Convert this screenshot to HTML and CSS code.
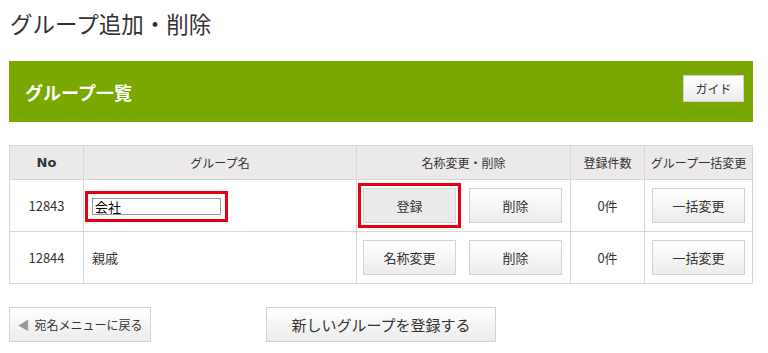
FILE: index.html
```html
<!DOCTYPE html>
<html lang="ja">

<head>
    <meta charset="UTF-8">
    <meta name="viewport" content="width=device-width, initial-scale=1.0">
    <title>グループ追加・削除</title>
    <link rel="stylesheet" href="styles.css">
</head>

<body>
    <div class="page">
        <h1 class="page-title">グループ追加・削除</h1>

        <div class="section-bar">
            <h2>グループ一覧</h2>
            <button class="btn guide-btn">ガイド</button>
        </div>

        <table class="group-table">
            <thead>
                <tr>
                    <th class="col-no">No</th>
                    <th class="col-name">グループ名</th>
                    <th class="col-edit">名称変更・削除</th>
                    <th class="col-count">登録件数</th>
                    <th class="col-bulk">グループ一括変更</th>
                </tr>
            </thead>
            <tbody>
                <tr>
                    <td class="num">12843</td>
                    <td class="name"><input type="text" class="name-input marked" value="会社"></td>
                    <td class="edit">
                        <div class="btn-pair">
                            <button class="btn cell-btn pressed marked-btn">登録</button>
                            <button class="btn cell-btn">削除</button>
                        </div>
                    </td>
                    <td class="count">0件</td>
                    <td class="bulk"><button class="btn cell-btn">一括変更</button></td>
                </tr>
                <tr>
                    <td class="num">12844</td>
                    <td class="name">親戚</td>
                    <td class="edit">
                        <div class="btn-pair">
                            <button class="btn cell-btn">名称変更</button>
                            <button class="btn cell-btn">削除</button>
                        </div>
                    </td>
                    <td class="count">0件</td>
                    <td class="bulk"><button class="btn cell-btn">一括変更</button></td>
                </tr>
            </tbody>
        </table>

        <div class="footer-actions">
            <button class="btn back-btn"><span class="arrow">&#9664;</span>宛名メニューに戻る</button>
            <button class="btn new-btn">新しいグループを登録する</button>
        </div>
    </div>
</body>

</html>
```

FILE: styles.css
```css
body {
    margin: 0;
    padding: 0;
    background-color: #fff;
    color: #333;
    font-family: "Noto Sans CJK JP", "Liberation Sans", sans-serif;
}

.page {
    width: 744px;
    padding: 0 9px;
}

.page-title {
    margin: 10px 0 0 1px;
    font-size: 22.5px;
    font-weight: normal;
    line-height: 27px;
    color: #333;
}

.section-bar {
    margin-top: 24px;
    height: 61px;
    background-color: #7aa800;
    display: flex;
    align-items: center;
    justify-content: space-between;
    padding: 0 9px 0 16px;
}

.section-bar h2 {
    margin: 0;
    color: #fff;
    font-size: 18px;
    font-weight: bold;
}

/* shared button look */
.btn {
    font-family: "Noto Sans CJK JP", "Liberation Sans", sans-serif;
    color: #333;
    background: linear-gradient(#ffffff, #ececec);
    border: 1px solid #d2d2d2;
    border-radius: 0;
    cursor: pointer;
    padding: 0;
}

.guide-btn {
    width: 61px;
    height: 27px;
    font-size: 12px;
    margin-top: -6px;
}

.group-table {
    margin-top: 23px;
    width: 744px;
    border-collapse: collapse;
    table-layout: fixed;
    font-size: 13px;
}

.group-table th,
.group-table td {
    border: 1px solid #d8d8d8;
    padding: 0;
}

.group-table th {
    height: 33px;
    background-color: #ebe9ea;
    font-size: 12px;
    font-weight: normal;
    color: #333;
}

.group-table th.col-no {
    font-weight: bold;
    font-size: 13px;
    font-family: "DejaVu Sans", sans-serif;
}

/* widths for the first four columns, the last one takes what is left */
.col-no { width: 73px; }
.col-name { width: 272px; }
.col-edit { width: 213px; }
.col-count { width: 73px; }

.group-table td {
    height: 51px;
    text-align: center;
}

.group-table td.name {
    text-align: left;
    padding-left: 8px;
}

.btn-pair {
    display: flex;
    gap: 13px;
    padding-left: 6px;
}

.cell-btn {
    width: 93px;
    height: 35px;
    font-size: 13px;
}

.cell-btn.pressed {
    background: #ebebeb;
    border-color: #d6d6d6;
}

.name-input {
    width: 129px;
    height: 17px;
    box-sizing: border-box;
    border: 1px solid #999;
    border-radius: 0;
    padding: 0 2px;
    font-size: 13px;
    font-family: "Noto Sans CJK JP", sans-serif;
    color: #000;
    vertical-align: middle;
}

/* red annotation frames */
.marked {
    outline: 3px solid #e60012;
    outline-offset: 4px;
}

.marked-btn {
    outline: 3px solid #e60012;
    outline-offset: 2px;
}

.footer-actions {
    margin-top: 23px;
    display: flex;
    gap: 115px;
}

.back-btn {
    width: 142px;
    height: 35px;
    font-size: 12px;
}

.back-btn .arrow {
    color: #999;
    font-size: 12px;
    margin-right: 5px;
}

.new-btn {
    width: 230px;
    height: 35px;
    font-size: 15px;
}
```
